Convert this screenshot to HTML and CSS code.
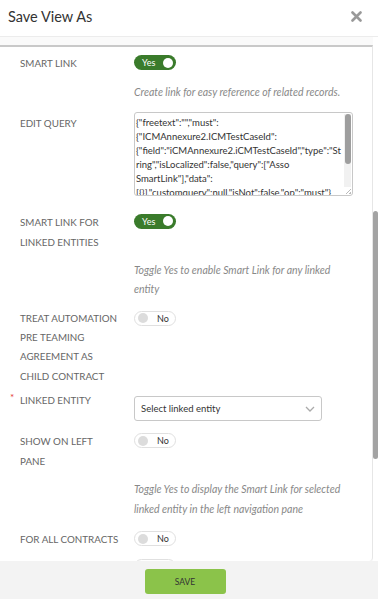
FILE: index.html
```html
<!DOCTYPE html>
<html lang="en">
<head>
  <meta charset="UTF-8" />
  <title>Save View As</title>
  <link rel="stylesheet" href="styles.css">
</head>
<body>
  <div class="modal">
    <div class="modal-header">
      <h2>Save View As</h2>
      <span class="close">
        <svg width="11" height="11" viewBox="0 0 11 11"><path d="M1.5 1.5 L9.5 9.5 M9.5 1.5 L1.5 9.5" stroke="#999" stroke-width="2.6" stroke-linecap="round"/></svg>
      </span>
    </div>

    <div class="modal-body">
      <div class="panel">
        <div class="row first">
          <div class="label">SMART LINK</div>
          <div class="toggle on"><span class="txt">Yes</span><span class="knob"></span></div>
        </div>
        <div class="help h1">Create link for easy reference of related records.</div>

        <div class="row query">
          <div class="label">EDIT QUERY</div>
          <div class="query-box">
            <div class="query-text">{"freetext":"","must":<br>{"ICMAnnexure2.ICMTestCaseId":<br>{"field":"iCMAnnexure2.iCMTestCaseId","type":"St<br>ring","isLocalized":false,"query":["Asso<br>SmartLink"],"data":<br>[{}],"customquery":null,"isNot":false,"op":"must"}</div>
            <div class="q-scroll"><span></span></div>
            <div class="q-grip"></div>
          </div>
        </div>

        <div class="row r4">
          <div class="label">SMART LINK FOR<br>LINKED ENTITIES</div>
          <div class="toggle on"><span class="txt">Yes</span><span class="knob"></span></div>
        </div>
        <div class="help h2">Toggle Yes to enable Smart Link for any linked<br>entity</div>

        <div class="row r6">
          <div class="label tall">TREAT AUTOMATION<br>PRE TEAMING<br>AGREEMENT AS<br>CHILD CONTRACT</div>
          <div class="toggle off"><span class="knob"></span><span class="txt">No</span></div>
        </div>

        <div class="row r7">
          <div class="label"><span class="req">*</span>LINKED ENTITY</div>
          <div class="select">
            <span>Select linked entity</span>
            <svg width="10" height="6" viewBox="0 0 10 6"><path d="M1 1 L5 5 L9 1" fill="none" stroke="#aaa" stroke-width="1.3"/></svg>
          </div>
        </div>

        <div class="row r8">
          <div class="label">SHOW ON LEFT<br>PANE</div>
          <div class="toggle off"><span class="knob"></span><span class="txt">No</span></div>
        </div>
        <div class="help h3">Toggle Yes to display the Smart Link for selected<br>linked entity in the left navigation pane</div>

        <div class="row r10">
          <div class="label">FOR ALL CONTRACTS</div>
          <div class="toggle off"><span class="knob"></span><span class="txt">No</span></div>
        </div>

        <div class="row r11">
          <div class="label"></div>
          <div class="toggle off"></div>
        </div>
      </div>
      <div class="page-scroll"><span></span></div>
    </div>

    <div class="modal-footer">
      <button class="save">SAVE</button>
    </div>
  </div>
</body>
</html>
```

FILE: styles.css
```css
body {
  margin: 0;
  font-family: 'Lato', 'Open Sans', sans-serif;
  background: #fff;
  color: #333;
}

.modal {
  width: 378px;
  height: 599px;
  display: flex;
  flex-direction: column;
  overflow: hidden;
}

.modal-header {
  height: 37px;
  box-sizing: border-box;
  display: flex;
  align-items: center;
  justify-content: space-between;
  padding: 0 16px 4px 8px;
  border-bottom: 1px solid #ececec;
}

.modal-header h2 {
  margin: 0;
  font-size: 14.5px;
  font-weight: 400;
  color: #333;
}

.close {
  display: flex;
}

.modal-body {
  flex: 1;
  position: relative;
  display: flex;
  background: #fafafa;
  padding-top: 8px;
  overflow: hidden;
}

.panel {
  flex: 1;
  background: #fff;
  border-top: 2px solid #c9c9c9;
  border-right: 1px solid #e6e6e6;
  border-bottom-right-radius: 4px;
  padding-left: 20px;
  overflow: hidden;
}

.page-scroll {
  width: 5px;
  background: #fff;
  margin-top: -8px;
  position: relative;
}

.page-scroll span {
  position: absolute;
  left: 0;
  top: 174px;
  width: 5px;
  height: 248px;
  background: #a3a3a3;
  border-radius: 3px;
}

.row {
  display: flex;
  align-items: flex-start;
}

.label {
  width: 114px;
  flex-shrink: 0;
  font-size: 9.8px;
  line-height: 20px;
  color: #666;
  position: relative;
}

.label.tall {
  line-height: 19.4px;
}

.req {
  position: absolute;
  left: -10px;
  top: -3px;
  color: #e53935;
  font-size: 10px;
}

.toggle {
  width: 42px;
  height: 15px;
  box-sizing: border-box;
  border-radius: 8px;
  display: flex;
  align-items: center;
  margin-top: 2px;
  font-size: 9px;
}

.toggle.on {
  background: #3a7b2b;
  color: #fff;
  justify-content: space-between;
  padding: 0 3px 0 8px;
}

.toggle.off {
  background: #fff;
  border: 1px solid #e0e0e0;
  color: #333;
  padding: 0 3px;
  gap: 9px;
}

.knob {
  width: 10px;
  height: 10px;
  border-radius: 50%;
  background: #fff;
}

.toggle.off .knob {
  background: #dcdcdc;
}

.help {
  margin-left: 114px;
  font-size: 10.5px;
  font-style: italic;
  color: #888;
  line-height: 19.5px;
}

.first { margin-top: 6px; }
.h1 { margin-top: 10px; }
.query { margin-top: 9px; }
.r4 { margin-top: 16px; }
.h2 { margin-top: 9px; }
.r6 { margin-top: 9px; }
.r7 { margin-top: 4px; }
.r8 { margin-top: 10px; }
.h3 { margin-top: 9px; }
.r10 { margin-top: 10px; }
.r11 { margin-top: 8px; }

.query .label {
  padding-top: 1px;
}

.query-box {
  width: 219px;
  height: 84px;
  box-sizing: border-box;
  border: 1px solid #c8c8c8;
  border-radius: 3px;
  position: relative;
  overflow: hidden;
}

.query-text {
  padding: 3px 0 0 1px;
  font-size: 9.5px;
  line-height: 14px;
  color: #333;
  white-space: nowrap;
  width: 208px;
  overflow: hidden;
}

.q-scroll {
  position: absolute;
  right: 1px;
  top: 1px;
  bottom: 8px;
  width: 7px;
  background: #f1f1f1;
}

.q-scroll span {
  position: absolute;
  left: 1px;
  top: 0;
  width: 6px;
  height: 50px;
  background: #9e9e9e;
  border-radius: 3px;
}

.q-grip {
  position: absolute;
  right: 1px;
  bottom: 1px;
  width: 6px;
  height: 6px;
  background: linear-gradient(135deg, transparent 55%, #bbb 55%, #bbb 65%, transparent 65%, transparent 80%, #bbb 80%);
}

.r7 .select {
  margin-top: 6px;
}

.select {
  width: 188px;
  height: 25px;
  box-sizing: border-box;
  border: 1px solid #c8c8c8;
  border-radius: 3px;
  display: flex;
  align-items: center;
  justify-content: space-between;
  padding: 0 6px 0 6px;
  font-size: 9.5px;
  color: #333;
}

.modal-footer {
  height: 38px;
  background: #f3f3f3;
  display: flex;
  align-items: flex-start;
  justify-content: center;
  padding-top: 8px;
  box-sizing: border-box;
  flex-shrink: 0;
  position: relative;
}

.save {
  width: 81px;
  height: 25px;
  background: #8bc34a;
  border: none;
  border-radius: 3px;
  font-family: 'Lato', sans-serif;
  font-size: 8.5px;
  color: #333;
  margin-left: -8px;
}
```
